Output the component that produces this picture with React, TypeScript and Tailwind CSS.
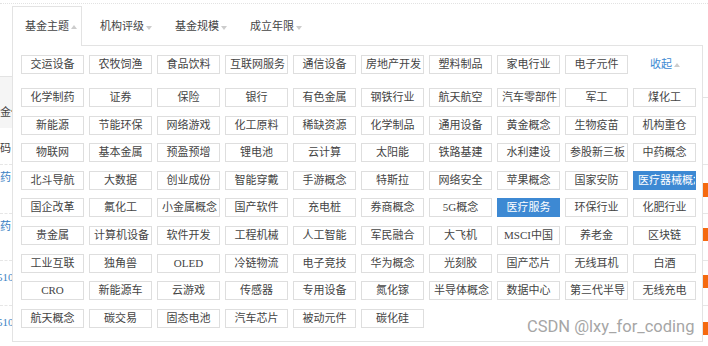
import React from "react";
import clsx from "clsx";

const TABS = ["基金主题", "机构评级", "基金规模", "成立年限"];

const FIRST_ROW = [
  "交运设备",
  "农牧饲渔",
  "食品饮料",
  "互联网服务",
  "通信设备",
  "房地产开发",
  "塑料制品",
  "家电行业",
  "电子元件",
];

const TAGS = [
  "化学制药", "证券", "保险", "银行", "有色金属", "钢铁行业", "航天航空", "汽车零部件", "军工", "煤化工",
  "新能源", "节能环保", "网络游戏", "化工原料", "稀缺资源", "化学制品", "通用设备", "黄金概念", "生物疫苗", "机构重仓",
  "物联网", "基本金属", "预盈预增", "锂电池", "云计算", "太阳能", "铁路基建", "水利建设", "参股新三板", "中药概念",
  "北斗导航", "大数据", "创业成份", "智能穿戴", "手游概念", "特斯拉", "网络安全", "苹果概念", "国家安防", "医疗器械概念",
  "国企改革", "氟化工", "小金属概念", "国产软件", "充电桩", "券商概念", "5G概念", "医疗服务", "环保行业", "化肥行业",
  "贵金属", "计算机设备", "软件开发", "工程机械", "人工智能", "军民融合", "大飞机", "MSCI中国", "养老金", "区块链",
  "工业互联", "独角兽", "OLED", "冷链物流", "电子竞技", "华为概念", "光刻胶", "国产芯片", "无线耳机", "白酒",
  "CRO", "新能源车", "云游戏", "传感器", "专用设备", "氮化镓", "半导体概念", "数据中心", "第三代半导", "无线充电",
  "航天概念", "碳交易", "固态电池", "汽车芯片", "被动元件", "碳化硅",
];

const ACTIVE = ["医疗器械概念", "医疗服务"];

const Caret = ({ up }: { up?: boolean }) =>
  up ? (
    <span className="ml-[2px] inline-block h-0 w-0 border-x-[3.5px] border-b-[4px] border-x-transparent border-b-[#cccccc]" />
  ) : (
    <span className="ml-[2px] mt-[2px] inline-block h-0 w-0 border-x-[3.5px] border-t-[4px] border-x-transparent border-t-[#cccccc]" />
  );

const Tag = ({ name }: { name: string }) => {
  const on = ACTIVE.includes(name);
  return (
    <span
      className={clsx(
        "block h-[19px] w-[63px] overflow-hidden whitespace-nowrap border px-[4px] text-center text-[11px] leading-[17px]",
        on ? "border-[#3d89d3] bg-[#3d89d3] text-white" : "border-[#dedede] bg-white text-[#444]"
      )}
    >
      {name}
    </span>
  );
};

export default function App() {
  return (
    <div className="relative h-[346px] w-[708px] overflow-hidden bg-white font-['Liberation_Serif','Noto_Sans_CJK_SC',serif]">
      {/* page behind the dropdown, only its edges show */}
      <div className="h-[4px] border-b border-dotted border-[#e2e2e2]" />
      <div className="flex justify-between">
        <div className="w-[12px] overflow-hidden whitespace-nowrap text-[11px] leading-[14px] text-[#444]">
          <div className="h-[72px]" />
          <div className="h-[52px] border-t border-[#e3e3e3] bg-[#f5f5f5] pt-[28px]">
            <div className="ml-[-11px]">基金代码</div>
          </div>
          <div className="h-[36px] pt-[13px]">
            <div className="ml-[-11px]">代码</div>
          </div>
          <div className="h-[49px] border-t border-dashed border-[#e6e6e6] pt-[5px] text-[#3b82c4]">
            <div className="ml-[-11px]">医药</div>
          </div>
          <div className="h-[47px] border-t border-dashed border-[#e6e6e6] pt-[5px] text-[#3b82c4]">
            <div className="ml-[-11px]">医药</div>
          </div>
          <div className="h-[45px] border-t border-dashed border-[#e6e6e6] pt-[9px] text-[#3b82c4]">
            <div className="ml-[-3px]">510</div>
          </div>
          <div className="h-[47px] border-t border-dashed border-[#e6e6e6] pt-[9px] text-[#3b82c4]">
            <div className="ml-[-3px]">510</div>
          </div>
        </div>
        <div className="w-[5px]">
          <div className="h-[93px]" />
          <div className="h-[67px] border-t border-[#e3e3e3]" />
          <div className="h-[49px] border-t border-dashed border-[#e6e6e6] pt-[18px]">
            <div className="h-[14px] bg-[#f5690f]" />
          </div>
          <div className="h-[47px] border-t border-dashed border-[#e6e6e6] pt-[14px]">
            <div className="h-[13px] bg-[#f5690f]" />
          </div>
          <div className="h-[45px] border-t border-dashed border-[#e6e6e6] pt-[14px]">
            <div className="h-[13px] bg-[#f5690f]" />
          </div>
          <div className="h-[47px] border-t border-dashed border-[#e6e6e6] pt-[16px]">
            <div className="h-[13px] bg-[#f5690f]" />
          </div>
        </div>
      </div>

      {/* dropdown: tabs + tag panel */}
      <div className="absolute left-0 top-0 w-full">
        <div className="relative z-10 -mb-px flex gap-x-[5px] pl-[12px] pt-[6px]">
          {TABS.map((tab, i) => (
            <div
              key={tab}
              className={clsx(
                "flex h-[40px] w-[70px] items-center border border-b-0 pl-[12px] text-[11px] text-[#444]",
                i === 0 ? "border-[#e3e3e3] bg-white" : "border-transparent"
              )}
            >
              <span>{tab}</span>
              <Caret up={i === 0} />
            </div>
          ))}
        </div>
        <div className="ml-[12px] h-[297px] w-[691px] border border-[#e3e3e3] bg-white pl-[8px] pt-[9px]">
          <div className="flex gap-x-[5px]">
            {FIRST_ROW.map((t) => (
              <Tag key={t} name={t} />
            ))}
            <span className="flex h-[19px] w-[63px] items-center pl-[17px] text-[11px] text-[#3d89d3]">
              收起
              <Caret up />
            </span>
          </div>
          <div className="mt-[14px] grid grid-cols-[repeat(10,63px)] gap-x-[5px] gap-y-[8.6px]">
            {TAGS.map((t) => (
              <Tag key={t} name={t} />
            ))}
          </div>
        </div>
      </div>

      <div className="absolute left-[527px] top-[317px] whitespace-nowrap font-['Roboto',sans-serif] text-[16.5px] leading-[20px] text-[#a6a6a6]">
        CSDN @lxy_for_coding
      </div>
    </div>
  );
}
